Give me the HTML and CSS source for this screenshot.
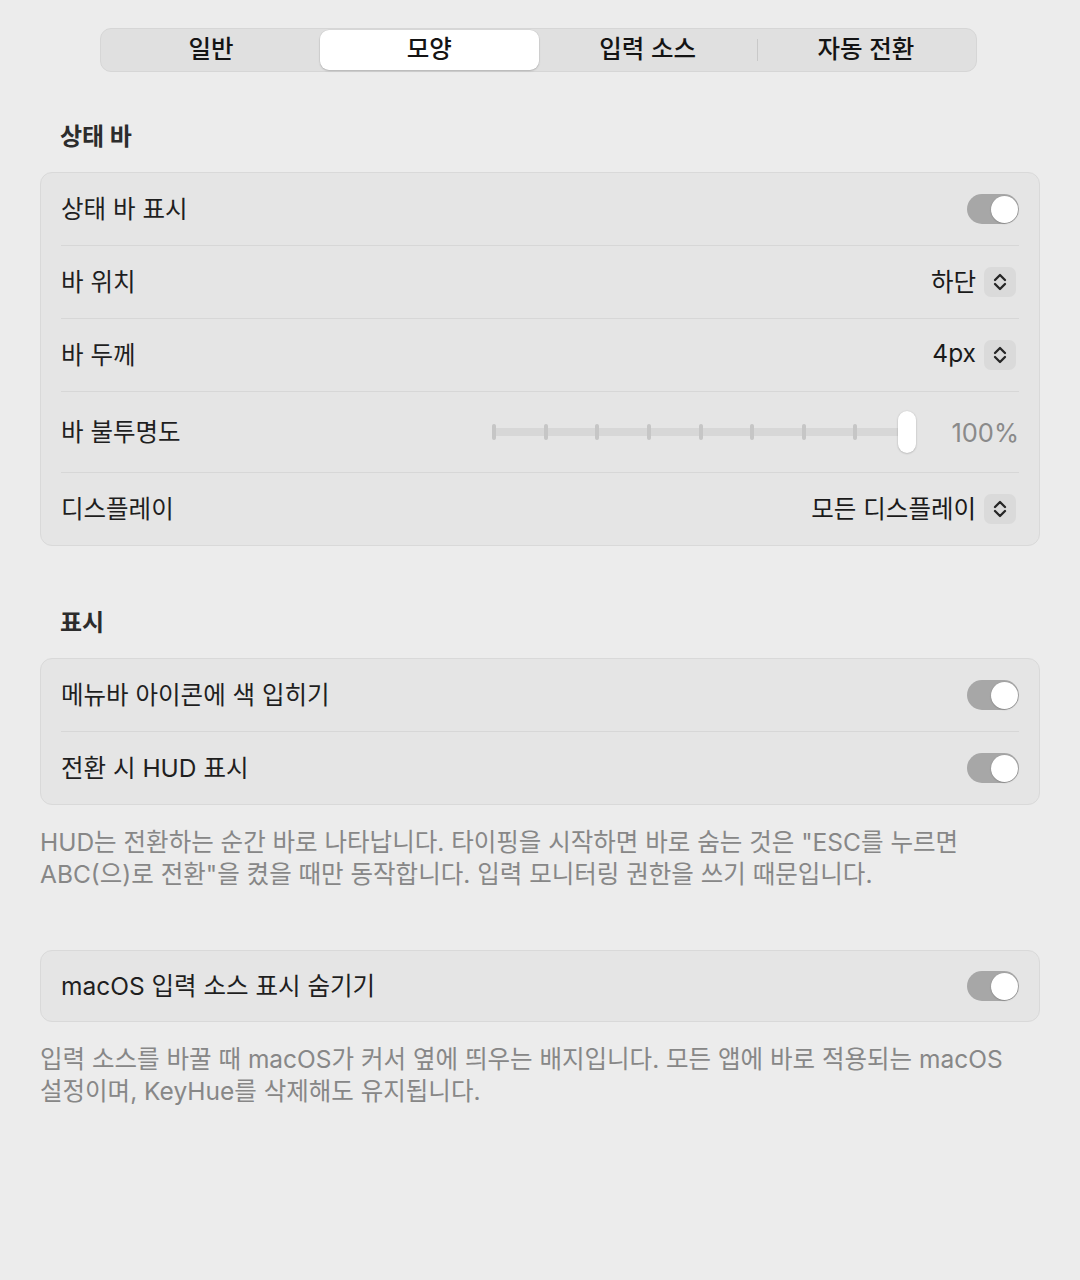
FILE: index.html
```html
<!DOCTYPE html>
<html lang="ko">
<head>
<meta charset="utf-8">
<title>모양</title>
<link rel="stylesheet" href="styles.css">
</head>
<body>
<div class="page">
  <div class="segmented">
    <div class="seg">일반</div>
    <div class="seg seg-selected">모양</div>
    <div class="seg">입력 소스</div>
    <div class="seg seg-divided">자동 전환</div>
  </div>

  <h2 class="section-title first">상태 바</h2>
  <div class="card">
    <div class="row">
      <span class="label">상태 바 표시</span>
      <span class="toggle"><span class="knob"></span></span>
    </div>
    <div class="row">
      <span class="label">바 위치</span>
      <span class="popup"><span class="popup-value">하단</span><span class="stepper"><svg viewBox="0 0 16 24" width="16" height="24"><path d="M3 10 L8 5 L13 10 M3 14 L8 19 L13 14" fill="none" stroke="#262626" stroke-width="2.3" stroke-linecap="round" stroke-linejoin="round"/></svg></span></span>
    </div>
    <div class="row">
      <span class="label">바 두께</span>
      <span class="popup"><span class="popup-value">4px</span><span class="stepper"><svg viewBox="0 0 16 24" width="16" height="24"><path d="M3 10 L8 5 L13 10 M3 14 L8 19 L13 14" fill="none" stroke="#262626" stroke-width="2.3" stroke-linecap="round" stroke-linejoin="round"/></svg></span></span>
    </div>
    <div class="row row-slider">
      <span class="label">바 불투명도</span>
      <span class="slider-group">
        <span class="slider">
          <span class="track"></span>
          <span class="ticks">
            <span class="tick"></span><span class="tick"></span><span class="tick"></span>
            <span class="tick"></span><span class="tick"></span><span class="tick"></span>
            <span class="tick"></span><span class="tick"></span><span class="tick"></span>
          </span>
          <span class="thumb"></span>
        </span>
        <span class="slider-value">100%</span>
      </span>
    </div>
    <div class="row">
      <span class="label">디스플레이</span>
      <span class="popup"><span class="popup-value">모든 디스플레이</span><span class="stepper"><svg viewBox="0 0 16 24" width="16" height="24"><path d="M3 10 L8 5 L13 10 M3 14 L8 19 L13 14" fill="none" stroke="#262626" stroke-width="2.3" stroke-linecap="round" stroke-linejoin="round"/></svg></span></span>
    </div>
  </div>

  <h2 class="section-title">표시</h2>
  <div class="card">
    <div class="row">
      <span class="label">메뉴바 아이콘에 색 입히기</span>
      <span class="toggle"><span class="knob"></span></span>
    </div>
    <div class="row">
      <span class="label">전환 시 HUD 표시</span>
      <span class="toggle"><span class="knob"></span></span>
    </div>
  </div>
  <p class="note">HUD는 전환하는 순간 바로 나타납니다. 타이핑을 시작하면 바로 숨는 것은 "ESC를 누르면 ABC(으)로 전환"을 켰을 때만 동작합니다. 입력 모니터링 권한을 쓰기 때문입니다.</p>

  <div class="card card-solo">
    <div class="row">
      <span class="label">macOS 입력 소스 표시 숨기기</span>
      <span class="toggle"><span class="knob"></span></span>
    </div>
  </div>
  <p class="note">입력 소스를 바꿀 때 macOS가 커서 옆에 띄우는 배지입니다. 모든 앱에 바로 적용되는 macOS 설정이며, KeyHue를 삭제해도 유지됩니다.</p>
</div>
</body>
</html>
```

FILE: styles.css
```css
html, body {
  margin: 0;
  padding: 0;
}

body {
  background: #ececec;
  font-family: Inter, "Noto Sans CJK KR", "Noto Sans", sans-serif;
  color: #1f1f1f;
  width: 1080px;
  height: 1280px;
  overflow: hidden;
}

.page {
  padding: 28px 40px 0 40px;
}

/* Segmented control */
.segmented {
  box-sizing: border-box;
  width: 877px;
  height: 44px;
  margin-left: 60px;
  padding: 1px;
  border: 1px solid #d6d6d6;
  border-radius: 11px;
  background: #e0e0e0;
  display: grid;
  grid-template-columns: repeat(4, 1fr);
}

.seg {
  position: relative;
  display: flex;
  align-items: center;
  justify-content: center;
  padding-bottom: 5px;
  font-size: 24.5px;
  font-weight: 500;
  color: #141414;
  border-radius: 9px;
}

.seg-selected {
  background: #ffffff;
  box-shadow: 0 1px 2px rgba(0, 0, 0, 0.18), 0 0 0 0.5px rgba(0, 0, 0, 0.06);
}

.seg-divided::before {
  content: "";
  position: absolute;
  left: 0;
  top: 9px;
  bottom: 9px;
  width: 1px;
  background: #c9c9c9;
}

/* Section titles */
.section-title {
  margin: 62px 0 20px 20px;
  font-size: 24px;
  line-height: 30px;
  font-weight: 700;
  color: #2c2c2c;
}

.section-title.first {
  margin-top: 50px;
}

/* Cards */
.card {
  background: #e5e5e5;
  border: 1px solid #d9d9d9;
  border-radius: 12px;
}

.card-solo {
  margin-top: 60px;
}

.card-solo .row {
  height: 70px;
}

.row {
  height: 72px;
  margin: 0 20px;
  display: flex;
  align-items: center;
  justify-content: space-between;
}

.row + .row {
  border-top: 1px solid #d7d7d7;
}

.row-slider {
  height: 80px;
}

.label {
  padding-bottom: 4px;
  font-size: 24.5px;
  color: #1f1f1f;
}

/* Toggle */
.toggle {
  box-sizing: border-box;
  width: 52px;
  height: 30px;
  border-radius: 15px;
  background: #a7a7a7;
  display: flex;
  align-items: center;
  justify-content: flex-end;
  padding: 0 1.5px;
}

.knob {
  width: 27px;
  height: 27px;
  border-radius: 50%;
  background: #ffffff;
  box-shadow: 0 0.5px 1.5px rgba(0, 0, 0, 0.3);
}

/* Popup */
.popup {
  display: flex;
  align-items: center;
  gap: 8px;
  margin-right: 3px;
}

.popup-value {
  padding-bottom: 4px;
  font-size: 24.5px;
  color: #1a1a1a;
}

.stepper {
  width: 32px;
  height: 30px;
  border-radius: 7px;
  background: #dadada;
  display: flex;
  align-items: center;
  justify-content: center;
}

.stepper svg {
  display: block;
}

/* Slider */
.slider-group {
  display: flex;
  align-items: center;
  gap: 31px;
}

.slider {
  position: relative;
  width: 424px;
  height: 42px;
}

.track {
  position: absolute;
  left: 0;
  right: 9px;
  top: 17px;
  height: 8px;
  border-radius: 4px;
  background: #d7d7d7;
}

.ticks {
  position: absolute;
  left: 0;
  right: 7px;
  top: 13px;
  height: 16px;
  display: flex;
  justify-content: space-between;
}

.tick {
  width: 4px;
  height: 16px;
  border-radius: 2px;
  background: #c6c6c6;
}

.thumb {
  position: absolute;
  right: 0;
  top: 0;
  width: 18px;
  height: 42px;
  border-radius: 9px;
  background: #ffffff;
  box-shadow: 0 0.5px 2px rgba(0, 0, 0, 0.28);
}

.slider-value {
  font-size: 25.5px;
  color: #8a8a8a;
  min-width: 72px;
  text-align: right;
}

/* Notes */
.note {
  margin: 21px 0 0 0;
  font-size: 24.5px;
  line-height: 32px;
  color: #878787;
  width: 1000px;
  word-break: keep-all;
}
```
